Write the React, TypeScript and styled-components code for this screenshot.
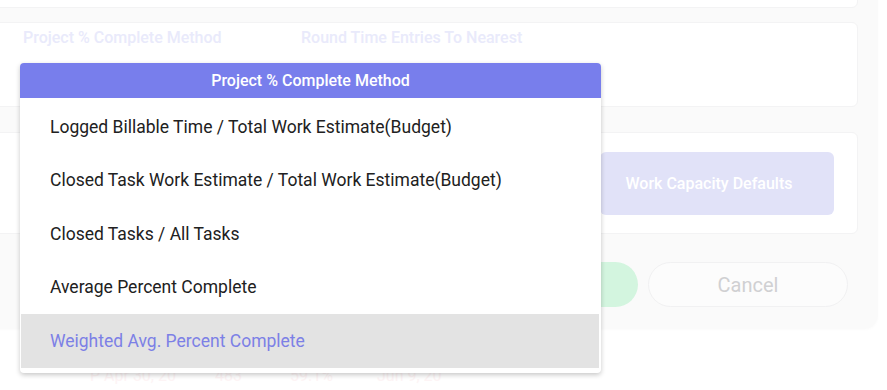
import React from "react";
import styled, { createGlobalStyle } from "styled-components";

const GlobalStyle = createGlobalStyle`
  html, body {
    margin: 0;
    padding: 0;
    background: #ffffff;
    font-family: Roboto, "Liberation Sans", Arial, sans-serif;
  }
`;

const S = {
  Page: styled.div`
    position: relative;
    width: 887px;
    height: 390px;
    overflow: hidden;
    background: #ffffff;
  `,
  Panel: styled.div`
    display: flex;
    flex-direction: column;
    width: 890px;
    margin: -40px 0 0 -12px;
    padding: 0 20px 0 0;
    box-sizing: border-box;
    background: #fafafa;
    border-radius: 0 0 14px 0;
    box-shadow: 0 1px 3px rgba(0, 0, 0, 0.02);
  `,
  Card: styled.div<{ height: number; gap: number }>`
    height: ${({ height }) => height}px;
    margin-top: ${({ gap }) => gap}px;
    background: #ffffff;
    border-radius: 6px;
    border: 1px solid #f3f3f4;
    box-sizing: border-box;
  `,
  FieldRow: styled.div`
    display: grid;
    grid-template-columns: 278px 1fr;
    padding: 4px 0 0 34px;
  `,
  FieldLabel: styled.div`
    font-size: 16px;
    line-height: 22px;
    font-weight: 500;
    color: #e9eafb;
  `,
  ButtonRow: styled.div<{ pad: string; height: number }>`
    display: flex;
    justify-content: flex-end;
    align-items: center;
    gap: 10px;
    height: ${({ height }) => height}px;
    padding: ${({ pad }) => pad};
    box-sizing: border-box;
  `,
  SoftButton: styled.div<{ bg: string; width: number; height: number; radius: number }>`
    display: flex;
    align-items: center;
    justify-content: center;
    width: ${({ width }) => width}px;
    height: ${({ height }) => height}px;
    padding-right: 16px;
    box-sizing: border-box;
    border-radius: ${({ radius }) => radius}px;
    background: ${({ bg }) => bg};
    color: #ffffff;
    font-size: 16px;
    font-weight: 500;
  `,
  CancelButton: styled.div`
    display: flex;
    align-items: center;
    justify-content: center;
    width: 200px;
    height: 45px;
    border-radius: 23px;
    border: 1px solid #f1f1f2;
    background: #fcfcfc;
    box-sizing: border-box;
    color: #d0d0d2;
    font-size: 20px;
  `,
  TableRow: styled.div`
    display: grid;
    grid-template-columns: 125px 75px 87px 100px;
    padding: 37px 0 0 90px;
    font-size: 16px;
    color: #fdf4f5;
  `,
  Dropdown: styled.div`
    position: absolute;
    left: 20px;
    top: 63px;
    width: 581px;
    background: #ffffff;
    border-radius: 4px;
    box-shadow: 0 2px 5px rgba(0, 0, 0, 0.22);
    padding: 0 2px 5px 1px;
    box-sizing: border-box;
  `,
  DropdownHeader: styled.div`
    height: 35px;
    margin: 0 -2px 2px -1px;
    display: flex;
    align-items: center;
    justify-content: center;
    background: #787eec;
    border-radius: 4px 4px 0 0;
    color: #ffffff;
    font-size: 16px;
    font-weight: 500;
  `,
  Option: styled.div<{ active?: boolean }>`
    height: 53.5px;
    display: flex;
    align-items: center;
    padding-left: 29px;
    font-size: 17.5px;
    color: ${({ active }) => (active ? "#7c80e6" : "#212121")};
    background: ${({ active }) => (active ? "#e3e3e3" : "transparent")};
  `,
};

const OPTIONS = [
  "Logged Billable Time / Total Work Estimate(Budget)",
  "Closed Task Work Estimate / Total Work Estimate(Budget)",
  "Closed Tasks / All Tasks",
  "Average Percent Complete",
  "Weighted Avg. Percent Complete",
];

const App: React.FC = () => {
  return (
    <S.Page>
      <GlobalStyle />
      <S.Panel>
        <S.Card height={48} gap={0} />
        <S.Card height={85} gap={14}>
          <S.FieldRow>
            <S.FieldLabel>Project % Complete Method</S.FieldLabel>
            <S.FieldLabel>Round Time Entries To Nearest</S.FieldLabel>
          </S.FieldRow>
        </S.Card>
        <S.Card height={102} gap={25}>
          <S.ButtonRow pad="0 23px 0 0" height={100}>
            <S.SoftButton bg="#c9cbf4" width={200} height={63} radius={6} />
            <S.SoftButton bg="#e1e2f8" width={234} height={63} radius={6}>
              Work Capacity Defaults
            </S.SoftButton>
          </S.ButtonRow>
        </S.Card>
        <S.ButtonRow pad="6px 10px 0 0" height={95}>
          <S.SoftButton bg="#d3f5df" width={200} height={45} radius={23} />
          <S.CancelButton>Cancel</S.CancelButton>
        </S.ButtonRow>
      </S.Panel>
      <S.TableRow>
        <span>P Apr 30, 20</span>
        <span>483</span>
        <span>59.1%</span>
        <span>Jun 9, 20</span>
      </S.TableRow>

      <S.Dropdown>
        <S.DropdownHeader>Project % Complete Method</S.DropdownHeader>
        {OPTIONS.map((option, i) => (
          <S.Option key={option} active={i === OPTIONS.length - 1}>
            {option}
          </S.Option>
        ))}
      </S.Dropdown>
    </S.Page>
  );
};

export default App;
